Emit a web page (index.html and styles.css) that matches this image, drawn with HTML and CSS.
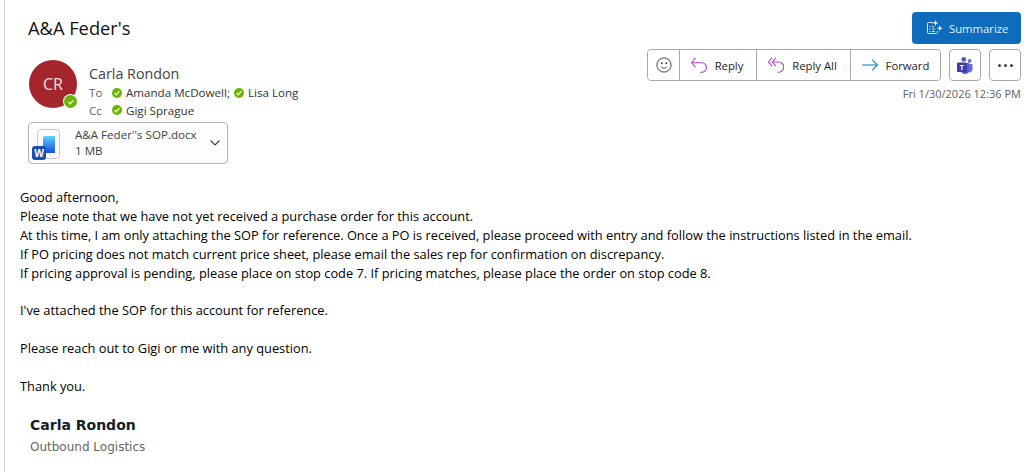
FILE: index.html
```html
<!DOCTYPE html>
<html lang="en">
<head>
  <meta charset="UTF-8" />
  <title>A&amp;A Feder's</title>
  <link rel="stylesheet" href="styles.css">
</head>
<body>
  <div class="reading-pane">
    <div class="subject-row">
      <h1 class="subject">A&amp;A Feder's</h1>
      <button class="summarize-btn">
        <svg width="16" height="16" viewBox="0 0 16 16" fill="none" stroke="#dce9f6" stroke-width="1">
          <path d="M6 2.5H1.5a1 1 0 0 0-1 1v9a1 1 0 0 0 1 1h8a1 1 0 0 0 1-1V11" />
          <path d="M2.5 6.5h1M5 6.5h2M2.5 9h1M5 9h3M2.5 11.5h1M5 11.5h3" />
          <path d="M8.5 0l.8 2.2 2.2.8-2.2.8-.8 2.2-.8-2.2-2.2-.8 2.2-.8z" fill="#eef5fb" stroke="none" />
          <path d="M12.8 5.2l.8 2.2 2.2.8-2.2.8-.8 2.2-.8-2.2-2.2-.8 2.2-.8z" fill="#eef5fb" stroke="none" />
        </svg>
        Summarize
      </button>
    </div>

    <div class="header-row">
      <div class="sender">
        <div class="avatar">CR
          <span class="presence presence-large"><svg viewBox="0 0 10 10" width="8" height="8"><path d="M2 5.2l2 2 4-4.2" fill="none" stroke="#fff" stroke-width="1.6" /></svg></span>
        </div>
        <div class="sender-info">
          <div class="sender-name">Carla Rondon</div>
          <div class="recipients">
            <span class="recipients-label">To</span>
            <span class="presence"><svg viewBox="0 0 10 10" width="8" height="8"><path d="M2 5.2l2 2 4-4.2" fill="none" stroke="#fff" stroke-width="1.6" /></svg></span>
            <span class="recipient">Amanda McDowell;</span>
            <span class="presence"><svg viewBox="0 0 10 10" width="8" height="8"><path d="M2 5.2l2 2 4-4.2" fill="none" stroke="#fff" stroke-width="1.6" /></svg></span>
            <span class="recipient">Lisa Long</span>
          </div>
          <div class="recipients">
            <span class="recipients-label">Cc</span>
            <span class="presence"><svg viewBox="0 0 10 10" width="8" height="8"><path d="M2 5.2l2 2 4-4.2" fill="none" stroke="#fff" stroke-width="1.6" /></svg></span>
            <span class="recipient">Gigi Sprague</span>
          </div>
        </div>
      </div>

      <div class="actions">
        <div class="action-row">
          <div class="btn-group">
            <button class="action-btn emoji-btn">
              <svg width="16" height="16" viewBox="0 0 18 18" fill="none" stroke="#424242" stroke-width="1.1">
                <circle cx="9" cy="9" r="8" />
                <path d="M5.6 10.8c1.7 2.4 5.1 2.4 6.8 0" />
                <circle cx="6.4" cy="7" r="1.1" fill="#424242" stroke="none" />
                <circle cx="11.6" cy="7" r="1.1" fill="#424242" stroke="none" />
              </svg>
            </button>
            <button class="action-btn reply-btn">
              <svg width="16" height="16" viewBox="0 0 16 16" fill="none" stroke="#b146c2" stroke-width="1.1">
                <path d="M4.5 0.8L0.7 5.7l3.8 4.8" />
                <path d="M0.7 5.7h10a4.8 4.8 0 0 1 0 9.6H9" />
              </svg>
              Reply
            </button>
            <button class="action-btn reply-all-btn">
              <svg width="16" height="16" viewBox="0 0 16 16" fill="none" stroke="#b146c2" stroke-width="1.1">
                <path d="M4 0.8L0.6 5l3.4 4.2" />
                <path d="M7.8 0.8L4.4 5l3.4 4.2" />
                <path d="M4.4 5h6.3a5 5 0 0 1 0 10.2H9.5" />
              </svg>
              Reply All
            </button>
            <button class="action-btn forward-btn">
              <svg width="16" height="12" viewBox="0 0 16 12" fill="none" stroke="#1a86d0" stroke-width="1.1">
                <path d="M0.2 6h15" />
                <path d="M10 0.6L15.4 6 10 11.4" />
              </svg>
              Forward
            </button>
          </div>
          <button class="square-btn">
            <svg width="16" height="17" viewBox="0 0 16 17">
              <circle cx="12.6" cy="4" r="1.9" fill="#6b70cf" />
              <path d="M10.5 7h5v5.5a3 3 0 0 1-4.5 2.6z" fill="#6b70cf" />
              <circle cx="6.8" cy="2.4" r="2.4" fill="#5559c4" />
              <path d="M4 6h8v7a4 4 0 0 1-8 0z" fill="#5559c4" />
              <rect x="0" y="5.5" width="9.5" height="9.5" rx="1" fill="#3b3fa6" />
              <text x="4.75" y="13" class="teams-t">T</text>
            </svg>
          </button>
          <button class="square-btn more-btn">
            <span class="dot"></span><span class="dot"></span><span class="dot"></span>
          </button>
        </div>
        <div class="sent-date">Fri 1/30/2026 12:36 PM</div>
      </div>
    </div>

    <div class="attachment">
      <div class="file-icon">
        <svg width="28" height="32" viewBox="0 0 28 32">
          <defs>
            <linearGradient id="doc-grad" x1="0" y1="0" x2="0" y2="1">
              <stop offset="0" stop-color="#62d0fb" />
              <stop offset="0.5" stop-color="#3a8df0" />
              <stop offset="1" stop-color="#1450d8" />
            </linearGradient>
          </defs>
          <rect x="5.5" y="0.5" width="22" height="29" rx="3" fill="#fbfbfb" stroke="#c8c8c8" />
          <path d="M11 9a2 2 0 0 1 2-2h10v17H13v-3h-2z" fill="url(#doc-grad)" />
          <rect x="0" y="17" width="14" height="14" rx="3" fill="#1a4fb0" />
          <text x="7" y="27.5" class="word-w">W</text>
        </svg>
      </div>
      <div class="file-info">
        <div class="file-name">A&amp;A Feder''s SOP.docx</div>
        <div class="file-size">1 MB</div>
      </div>
      <svg class="chevron" width="10" height="6" viewBox="0 0 10 6" fill="none" stroke="#424242" stroke-width="1.2">
        <path d="M0.5 0.5L5 5l4.5-4.5" />
      </svg>
    </div>

    <div class="message-body">
      <p>Good afternoon,</p>
      <p>Please note that we have not yet received a purchase order for this account.</p>
      <p>At this time, I am only attaching the SOP for reference. Once a PO is received, please proceed with entry and follow the instructions listed in the email.</p>
      <p>If PO pricing does not match current price sheet, please email the sales rep for confirmation on discrepancy.</p>
      <p>If pricing approval is pending, please place on stop code 7. If pricing matches, please place the order on stop code 8.</p>
      <br>
      <p>I've attached the SOP for this account for reference.</p>
      <br>
      <p>Please reach out to Gigi or me with any question.</p>
      <br>
      <p>Thank you.</p>
    </div>

    <div class="signature">
      <div class="signature-name">Carla Rondon</div>
      <div class="signature-title">Outbound Logistics</div>
    </div>
  </div>
</body>
</html>
```

FILE: styles.css
```css
* { margin: 0; padding: 0; box-sizing: border-box; }

html, body { height: 100%; }

body {
  font-family: "Open Sans", "Noto Sans", Arial, sans-serif;
  background: #fff;
  color: #242424;
  overflow: hidden;
}

button {
  font-family: inherit;
  background: #fff;
  cursor: pointer;
}

.reading-pane {
  margin-left: 4px;
  height: 100%;
  border-left: 1px solid #d1d1d1;
  padding: 12px 6px 0 15px;
}

/* Subject */
.subject-row {
  display: flex;
  justify-content: space-between;
  align-items: flex-start;
}
.subject {
  font-size: 18.3px;
  font-weight: 400;
  line-height: 32px;
  margin-left: 8px;
  color: #111;
}
.summarize-btn {
  display: flex;
  align-items: center;
  gap: 6px;
  width: 109px;
  height: 32px;
  padding-left: 15px;
  border: none;
  border-radius: 4px;
  background: #0f6cbd;
  color: #e6f0fa;
  font-size: 11.3px;
}

/* Sender + actions */
.header-row {
  display: flex;
  justify-content: space-between;
  align-items: flex-start;
  margin-top: 5px;
}
.sender {
  display: flex;
  margin: 11px 0 0 9px;
}
.avatar {
  position: relative;
  width: 48px;
  height: 48px;
  border-radius: 50%;
  background: #a4262c;
  color: #f5dede;
  font-size: 16px;
  line-height: 48px;
  text-align: center;
  flex-shrink: 0;
}
.presence {
  display: inline-flex;
  align-items: center;
  justify-content: center;
  width: 10px;
  height: 10px;
  border-radius: 50%;
  background: #6bb700;
  flex-shrink: 0;
}
.presence-large {
  position: absolute;
  right: 0;
  bottom: 0;
  width: 13px;
  height: 13px;
  box-shadow: 0 0 0 1px #fff;
}
.sender-info {
  margin-left: 12px;
  padding-top: 4px;
}
.sender-name {
  font-size: 14.3px;
  line-height: 20px;
  color: #424242;
}
.recipients {
  display: flex;
  align-items: center;
  font-size: 11.6px;
  line-height: 17.6px;
  color: #333;
}
.recipients-label {
  width: 23px;
  color: #616161;
}
.recipients .presence {
  margin-right: 4px;
}
.recipient {
  margin-right: 4px;
}

.actions {
  display: flex;
  flex-direction: column;
  align-items: flex-end;
}
.action-row {
  display: flex;
  gap: 8px;
}
.btn-group {
  display: flex;
  height: 32px;
  border: 1px solid #a8a8a8;
  border-radius: 4px;
}
.action-btn {
  display: flex;
  align-items: center;
  justify-content: center;
  gap: 8px;
  height: 100%;
  border: none;
  border-left: 1px solid #a8a8a8;
  border-radius: 0 4px 4px 0;
  font-size: 11.3px;
  color: #242424;
}
.emoji-btn { width: 31px; border-left: none; border-radius: 4px 0 0 4px; }
.reply-btn { width: 77px; padding-right: 2px; border-radius: 0; }
.reply-all-btn { width: 94px; padding-right: 2px; border-radius: 0; }
.forward-btn { width: 90px; }
.square-btn {
  display: flex;
  align-items: center;
  justify-content: center;
  gap: 3px;
  width: 32px;
  height: 32px;
  border: 1px solid #a8a8a8;
  border-radius: 4px;
}
.teams-t {
  font: 700 7px "Open Sans", sans-serif;
  fill: #fff;
  text-anchor: middle;
}
.dot {
  width: 3px;
  height: 3px;
  border-radius: 50%;
  background: #424242;
}
.sent-date {
  margin-top: 5px;
  font-size: 11px;
  line-height: 16px;
  color: #616161;
}

/* Attachment */
.attachment {
  display: flex;
  align-items: center;
  width: 200px;
  height: 42px;
  margin: 2.8px 0 0 8px;
  padding: 5px 0 0 3px;
  border: 1px solid #b3b3b3;
  border-radius: 4px;
  background: #fdfdfd;
}
.file-icon {
  display: flex;
  width: 28px;
}
.file-info {
  flex: 1;
  margin: -5px 0 0 15px;
}
.file-name, .file-size {
  font-size: 11.6px;
  line-height: 16px;
  color: #424242;
}
.word-w {
  font: 700 10px "Open Sans", sans-serif;
  fill: #fff;
  text-anchor: middle;
}
.chevron {
  margin: -5px 7px 0 0;
}

/* Body */
.message-body {
  margin-top: 24px;
  font-size: 12.82px;
  line-height: 18.9px;
  color: #000;
}
.signature {
  margin: 18px 0 0 10px;
  font-family: "DejaVu Sans", Verdana, sans-serif;
}
.signature-name {
  font-size: 14px;
  font-weight: 700;
  line-height: 22px;
  color: #12202b;
}
.signature-title {
  font-size: 12px;
  line-height: 23px;
  color: #666;
}
```
